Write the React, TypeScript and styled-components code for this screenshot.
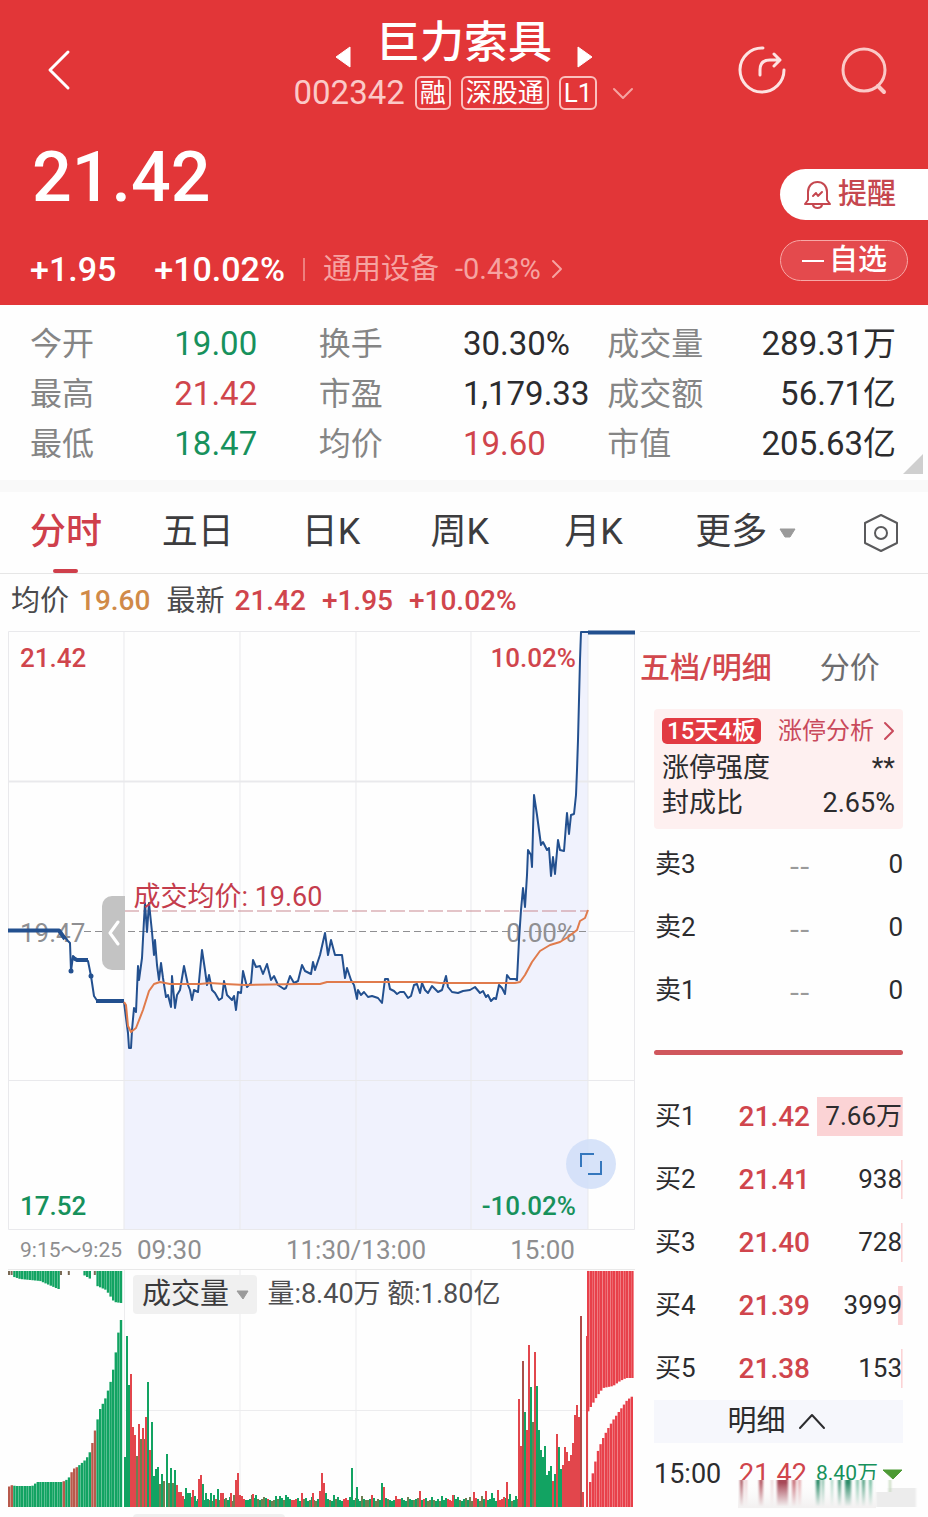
import React from "react";
import styled, { createGlobalStyle } from "styled-components";

const RED = "#d0454c";
const GREEN = "#17915c";
const INK = "#2c2c2e";

const GlobalStyle = createGlobalStyle`
  * { box-sizing: border-box; }
  body { margin: 0; background: #fefefe; }
  body, button { font-family: Roboto, "Noto Sans CJK SC", sans-serif; line-height: 1.2; }
  button { border: 0; padding: 0; margin: 0; background: none; color: inherit; cursor: pointer; }
  svg { display: block; }
`;

const Page = styled.main`
  color: ${INK};
  overflow: hidden;
`;

/* ---------- header ---------- */

const Header = styled.header`
  background: #e23638;
  color: #fff;
`;

const TopBar = styled.div`
  display: grid;
  grid-template-columns: 1fr auto 1fr;
`;

const TopSide = styled.div<{ $end?: boolean }>`
  display: flex;
  align-items: center;
  justify-content: ${(p) => (p.$end ? "flex-end" : "flex-start")};
  gap: 52px;
  padding: 30px 40px 0 46px;
`;

const IconButton = styled.button`
  display: flex;
`;

const TitleBlock = styled.div`
  display: flex;
  flex-direction: column;
  align-items: center;
  gap: 6px;
  padding-top: 16px;
`;

const TitleRow = styled.div`
  display: flex;
  align-items: flex-end;
  gap: 24px;
  height: 54px;
`;

const Title = styled.h1`
  margin: 0;
  font-size: 44px;
  line-height: 54px;
  font-weight: 500;
`;

const StepButton = styled(IconButton)`
  margin-bottom: 2px;
`;

const CodeRow = styled.div`
  display: flex;
  align-items: center;
  gap: 10px;
  height: 34px;
`;

const Code = styled.span`
  font-size: 33px;
  line-height: 34px;
  color: #fbc9c7;
`;

const Badge = styled.span`
  height: 34px;
  padding: 0 3px;
  border: 2px solid #fbc0be;
  border-radius: 6px;
  font-size: 26px;
  line-height: 31px;
`;

const CodeButton = styled(IconButton)`
  margin-left: 5px;
`;

const QuoteRow = styled.div`
  display: flex;
  justify-content: space-between;
  padding-bottom: 16px;
`;

const QuoteMain = styled.div`
  padding: 31px 0 0 30px;
`;

const BigPrice = styled.div`
  padding-left: 2px;
  font-size: 70px;
  line-height: 72px;
  font-weight: 500;
`;

const ChangeRow = styled.div`
  display: flex;
  align-items: center;
  height: 40px;
  margin-top: 36px;
  font-size: 34px;
  font-weight: 500;
`;

const ChangeRate = styled.span`
  margin-left: 38px;
`;

const Divider = styled.span`
  width: 2px;
  height: 23px;
  margin: 0 18px;
  background: #ee7f7e;
`;

const SectorLink = styled.a`
  display: flex;
  align-items: center;
  gap: 16px;
  color: #f6a3a1;
  font-size: 29px;
  font-weight: 400;
  text-decoration: none;
`;

const SectorRate = styled.span`
  display: flex;
  align-items: center;
  gap: 10px;
`;

const QuoteActions = styled.div`
  display: flex;
  flex-direction: column;
  gap: 20px;
  padding-top: 59px;
`;

const RemindButton = styled.button`
  display: flex;
  align-items: center;
  gap: 6px;
  width: 148px;
  height: 51px;
  padding-left: 23px;
  border-radius: 26px 0 0 26px;
  background: #fff;
  color: #c5474f;
  font-size: 29px;
  font-weight: 500;
`;

const WatchButton = styled.button`
  display: flex;
  align-items: center;
  justify-content: center;
  gap: 4px;
  width: 128px;
  height: 41px;
  border: 1px solid #f7a8a6;
  border-radius: 21px;
  background: #e44a4d;
  font-size: 29px;
  font-weight: 500;
`;

/* ---------- key figures ---------- */

const Stats = styled.dl`
  position: relative;
  display: grid;
  grid-template-columns: repeat(3, 1fr);
  margin: 0;
  padding: 14px 32px 11px 30px;
  border-bottom: 12px solid #f9f9f9;
`;

const Stat = styled.div`
  display: grid;
  grid-template-columns: 1fr 1fr;
  font-size: 33px;
  line-height: 50px;
  white-space: nowrap;
`;

const StatName = styled.dt`
  color: #858585;
  font-size: 32px;
`;

const StatValue = styled.dd<{ $color?: string; $end?: boolean }>`
  margin: 0;
  justify-self: ${(p) => (p.$end ? "end" : "start")};
  color: ${(p) => p.$color ?? INK};
`;

const Corner = styled.svg`
  position: absolute;
  right: 5px;
  bottom: 6px;
`;

/* ---------- period tabs ---------- */

const Tabs = styled.nav`
  display: grid;
  grid-template-columns: 132fr 140fr 129fr 134fr 131fr 167fr auto;
  align-items: center;
  height: 82px;
  padding: 0 28px 0 30px;
  border-bottom: 1px solid #e6e6e6;
`;

const Tab = styled.button<{ $active?: boolean }>`
  position: relative;
  display: flex;
  align-items: center;
  justify-self: start;
  gap: 12px;
  height: 81px;
  color: ${(p) => (p.$active ? "#cf3f4b" : "#3c3c3e")};
  font-size: 36px;
  font-weight: ${(p) => (p.$active ? 500 : 400)};
  &::after {
    content: "";
    display: ${(p) => (p.$active ? "block" : "none")};
    position: absolute;
    left: 50%;
    bottom: 0;
    width: 25px;
    height: 4px;
    margin-left: -13px;
    border-radius: 2px;
    background: #cf3f4b;
  }
`;

const Summary = styled.div`
  display: flex;
  align-items: center;
  gap: 10px;
  height: 57px;
  padding: 0 0 3px 11px;
  color: #4a4a4c;
  font-size: 29px;
`;

const SummaryValue = styled.span<{ $color: string }>`
  margin-right: 6px;
  color: ${(p) => p.$color};
  font-size: 28px;
  font-weight: 500;
`;

/* ---------- charts ---------- */

const Board = styled.section`
  display: grid;
  grid-template-columns: minmax(0, 1fr) 288px;
`;

const Charts = styled.div`
  padding: 0 5px 0 8px;
`;

const Plot = styled.div<{ $height: number }>`
  position: relative;
  height: ${(p) => p.$height}px;
`;

const Canvas = styled.svg`
  width: 100%;
  height: 100%;
  overflow: visible;
`;

const Overlay = styled.div`
  position: absolute;
  inset: 0;
`;

const Mark = styled.span<{ $color: string; $top: number; $end?: boolean; $light?: boolean }>`
  position: absolute;
  top: ${(p) => p.$top}px;
  ${(p) => (p.$end ? "right: 59px;" : "left: 12px;")}
  color: ${(p) => p.$color};
  font-size: 26px;
  line-height: 30px;
  font-weight: ${(p) => (p.$light ? 400 : 500)};
`;

const AverageMark = styled.span`
  position: absolute;
  left: 20%;
  top: 249px;
  color: #c43c4c;
  font-size: 27px;
  line-height: 34px;
`;

const Handle = styled.button`
  position: absolute;
  left: 15%;
  top: 265px;
  display: flex;
  align-items: center;
  justify-content: center;
  width: 23px;
  height: 74px;
  border-radius: 10px 0 0 10px;
  background: #c3c3c3;
`;

const ExpandButton = styled.button`
  position: absolute;
  right: 19px;
  top: 508px;
  display: flex;
  align-items: center;
  justify-content: center;
  width: 50px;
  height: 50px;
  border-radius: 50%;
  background: rgba(208, 222, 248, 0.85);
`;

const Axis = styled.div`
  display: grid;
  grid-template-columns: 116fr 464fr 47fr;
  align-items: center;
  height: 40px;
  padding-top: 2px;
  border-bottom: 1px solid #e9e9e9;
  color: #8e8e90;
  font-size: 26px;
  white-space: nowrap;
`;

const AuctionTime = styled.span`
  padding-left: 12px;
  font-size: 21px;
`;

const SessionTimes = styled.div`
  display: flex;
  justify-content: space-between;
  padding: 0 13px;
`;

const VolumeBar = styled.div`
  position: absolute;
  left: 20%;
  top: 5px;
  display: flex;
  align-items: center;
  gap: 10px;
  color: #4e4e50;
  font-size: 27px;
  white-space: nowrap;
`;

const Chip = styled.button`
  display: flex;
  align-items: center;
  justify-content: center;
  gap: 7px;
  width: 124px;
  height: 39px;
  border-radius: 4px;
  background: #f0f0f0;
  color: #3a3a3c;
  font-size: 29px;
`;

const NextPanel = styled.div`
  height: 10px;
  padding: 7px 0 0 20%;
  overflow: hidden;
`;

const NextChip = styled.div`
  width: 152px;
  height: 39px;
  border-radius: 4px;
  background: #f0f0f0;
`;

/* ---------- order book ---------- */

const Side = styled.aside`
  padding-right: 8px;
`;

const SideTabs = styled.div`
  display: flex;
  align-items: center;
  gap: 48px;
  height: 73px;
  border-top: 1px solid #ececec;
`;

const SideTab = styled.button<{ $active?: boolean }>`
  color: ${(p) => (p.$active ? "#d2484d" : "#6d6d6f")};
  font-size: 30px;
  font-weight: ${(p) => (p.$active ? 500 : 400)};
`;

const SideBody = styled.div`
  padding: 5px 17px 0 14px;
`;

const LimitCard = styled.div`
  height: 120px;
  padding: 9px 8px;
  border-radius: 4px;
  background: #fef0f0;
`;

const LimitHead = styled.div`
  display: flex;
  align-items: center;
  justify-content: space-between;
  height: 26px;
  margin-bottom: 7px;
`;

const LimitTag = styled.span`
  padding: 0 5px;
  border-radius: 5px;
  background: #e23a42;
  color: #fff;
  font-size: 24px;
  line-height: 26px;
  font-weight: 500;
`;

const LimitLink = styled.a`
  display: flex;
  align-items: center;
  gap: 9px;
  color: #c94a5c;
  font-size: 24px;
  line-height: 26px;
  text-decoration: none;
`;

const LimitRow = styled.div`
  display: flex;
  justify-content: space-between;
  font-size: 27px;
  line-height: 35px;
`;

const Book = styled.table<{ $top: number }>`
  width: 100%;
  margin-top: ${(p) => p.$top}px;
  border-collapse: collapse;
  font-size: 26px;
  table-layout: fixed;
`;

const Level = styled.th`
  height: 63px;
  width: 76px;
  padding: 0 0 0 1px;
  font-weight: 400;
  text-align: left;
`;

const Price = styled.td`
  width: 80px;
  padding: 0;
  color: ${RED};
  font-size: 28px;
  font-weight: 500;
  text-align: right;
`;

const EmptyPrice = styled(Price)`
  padding-bottom: 4px;
  color: #9a9a9a;
  font-family: "Noto Sans CJK SC", sans-serif;
  font-size: 30px;
  font-weight: 400;
`;

const Quantity = styled.td`
  padding: 0;
  text-align: right;
`;

const Depth = styled.span<{ $share: number }>`
  display: inline-block;
  height: 39px;
  padding: 0 1px 0 8px;
  background: linear-gradient(#fbd3d5, #fbd3d5) right / ${(p) => p.$share}% 100% no-repeat;
  line-height: 39px;
  white-space: nowrap;
`;

const SplitBar = styled.div`
  height: 5px;
  margin-top: 28px;
  border-radius: 3px;
  background: #d0575d;
`;

const DetailToggle = styled.button`
  display: flex;
  align-items: center;
  justify-content: center;
  gap: 12px;
  width: 100%;
  height: 43px;
  padding-right: 4px;
  background: #f6f7fc;
  font-size: 29px;
`;

const Trade = styled.div`
  position: relative;
  display: grid;
  grid-template-columns: 85px 77px 1fr auto;
  align-items: center;
  height: 62px;
  font-size: 27px;
`;

const TradePrice = styled.span`
  color: ${RED};
`;

const TradeSize = styled.span`
  color: ${GREEN};
  font-size: 21px;
`;

const Smear = styled.svg`
  position: absolute;
  right: -15px;
  top: 37px;
`;

/* ---------- data ---------- */

const auctionOpen = "8,930 59,930 63,935 68,941 70,943 71,971 73,956 77,960 88,961 91,976 94,996 98,1002 124,1002";

const priceLine =
  "124,1002 126,1018 128,1033 129,1048 131,1048 132,1030 134,1008 136,1012 138,966 139,980 142,958 144,920 145,903 147,932 149,903 152,932 154,955 155,940 157,965 159,980 161,963 163,978 166,997 168,995 171,1007 172,976 175,1008 177,995 180,990 184,966 188,985 190,990 192,1000 194,990 198,992 202,950 205,970 207,985 209,975 212,990 215,993 219,1000 222,998 224,981 227,995 232,1000 234,996 236,1010 238,992 241,993 243,971 247,987 251,983 253,960 256,967 260,966 263,974 267,964 271,980 274,976 278,985 284,989 286,988 290,976 294,983 298,981 302,965 305,971 311,974 313,962 315,970 320,955 325,933 328,955 331,940 335,955 342,955 345,978 347,968 351,980 354,985 357,999 358,990 361,995 364,992 368,997 372,996 378,998 382,1003 385,979 388,979 390,989 394,991 397,994 400,992 404,992 408,998 411,996 414,985 417,984 420,993 422,983 425,990 428,993 432,986 438,992 442,990 446,976 448,987 452,992 458,993 463,991 470,990 475,987 480,993 483,991 486,997 488,995 491,1001 494,998 496,999 499,985 502,988 505,994 507,975 510,979 515,979 517,980 519,940 521,910 523,888 525,907 527,875 528,850 531,855 532,867 533,830 534,795 537,815 541,845 543,842 547,850 549,848 551,876 553,857 555,874 558,840 560,850 564,851 566,825 567,813 569,834 571,815 574,814 576,795 577,770 578,740 579,700 580,660 581,632 588,632";

const averageLine =
  "124,1002 126,1005 128,1026 131,1032 136,1028 143,1010 149,991 154,984 160,982 170,984 200,984 210,983 225,984 245,985 300,984 320,984 327,982 430,982 440,983 515,983 520,982 525,975 532,962 540,951 550,945 560,942 568,937 577,930 580,921 585,918 588,910";

type Bar = { x: number; h: number; c: string; w?: number };
const UP = "#e2464c";
const DOWN = "#12a362";
const MIXED = "#6f7f52";
const DENSE = 2.4;

/* Linear interpolation through [x, value] stops. */
const curve = (stops: number[][], x: number) => {
  for (let i = 1; i < stops.length; i++) {
    const [x0, v0] = stops[i - 1];
    const [x1, v1] = stops[i];
    if (x <= x1) return v0 + ((v1 - v0) * (x - x0)) / (x1 - x0);
  }
  return stops[stops.length - 1][1];
};

const range = (from: number, to: number, step: number) =>
  Array.from({ length: Math.floor((to - from) / step) + 1 }, (_, i) => from + i * step);

const openTop: Bar[] = range(9, 121, 2.6).map((x) => {
  const gap = (x > 60 && x < 82) || (x > 92 && x < 95);
  const dot = x < 14 || (x > 60 && x < 63) || (x > 67 && x < 71) || (x > 94 && x < 97);
  const h = dot ? 4 : gap ? 0 : curve([[14, 6], [20, 8], [40, 10], [58, 18], [60, 18], [82, 3], [92, 9], [97, 15], [106, 19], [114, 31], [121, 32]], x);
  return { x, h, c: dot ? "#7a6a55" : DOWN, w: dot ? 2 : DENSE };
});

const openBottom: Bar[] = range(9, 122, 2.6).map((x) => ({
  x,
  h: curve([[8, 20], [12, 22], [15, 21], [32, 21], [37, 25], [62, 25], [68, 28], [73, 38], [77, 40], [84, 46], [88, 51], [91, 58], [94, 73], [97, 86], [100, 98], [105, 108], [109, 120], [112, 131], [115, 150], [118, 173], [120, 187]], x),
  c: x < 13 || (x > 61 && x < 66) || (x > 71 && x < 77) || (x > 92 && x < 97) ? "#b85a4c" : DOWN,
  w: DENSE,
}));

const busy: [number, number, string][] = [
  [125, 50, DOWN], [127, 171, DOWN], [129, 122, DOWN], [131, 133, UP], [133, 80, UP], [135, 72, UP], [137, 51, MIXED], [139, 83, UP], [141, 68, MIXED], [143, 79, UP], [145, 68, MIXED], [146, 90, UP], [148, 125, DOWN], [150, 57, UP], [152, 85, DOWN], [154, 31, DOWN], [156, 38, DOWN], [158, 40, DOWN], [160, 23, MIXED], [162, 33, DOWN], [164, 26, MIXED], [167, 53, DOWN], [169, 24, MIXED], [171, 39, DOWN], [173, 24, MIXED], [175, 37, DOWN], [177, 22, UP], [179, 15, UP], [181, 15, UP], [183, 11, UP], [186, 19, DOWN], [188, 14, DOWN], [190, 14, DOWN], [193, 17, UP], [195, 11, DOWN], [199, 28, UP], [201, 32, UP], [203, 23, DOWN], [206, 14, DOWN], [211, 14, DOWN], [218, 18, DOWN], [221, 14, UP], [223, 14, UP], [231, 14, UP], [234, 12, MIXED], [236, 27, UP], [238, 34, UP], [240, 12, UP], [253, 13, UP], [256, 12, DOWN], [280, 11, DOWN], [286, 12, DOWN], [302, 14, UP], [313, 14, UP], [320, 16, UP], [322, 34, UP], [324, 24, UP], [326, 14, DOWN], [352, 39, DOWN], [357, 20, DOWN], [382, 24, DOWN], [384, 20, UP], [420, 16, UP], [453, 12, UP], [474, 15, UP], [486, 16, UP], [492, 14, DOWN], [498, 17, UP], [507, 25, UP], [510, 13, DOWN],
  [519, 108, UP], [521, 61, UP], [523, 146, "#a8504a"], [525, 95, DOWN], [527, 77, UP], [529, 162, UP], [531, 120, DOWN], [533, 85, MIXED], [535, 155, UP], [537, 121, DOWN], [539, 77, DOWN], [541, 57, DOWN], [543, 50, DOWN], [545, 61, DOWN], [547, 32, DOWN], [549, 36, DOWN], [551, 41, DOWN], [553, 26, UP], [555, 33, DOWN], [557, 73, UP], [559, 60, DOWN], [561, 38, DOWN], [563, 42, UP], [565, 60, UP], [567, 55, UP], [569, 46, UP], [571, 52, UP], [573, 64, UP], [575, 92, UP], [577, 102, UP], [579, 90, UP], [581, 191, "#b04a48"], [583, 15, UP], [587, 171, UP],
];

/* One digit per two-pixel slot: the height of the calm trading between the peaks. */
const calm = "8967a7686b79876c8a76897a67986b8778c96878a98767b88976a8778967";
const tones = [DOWN, DOWN, UP, MIXED, UP, UP, MIXED, DOWN, MIXED, MIXED, UP, DOWN, MIXED];

const quiet: Bar[] = range(184, 518, 2).map((x, i) => ({
  x,
  h: parseInt(calm[i % calm.length], 16),
  c: tones[(i * i + (i >> 1)) % tones.length],
}));

const closeTop: Bar[] = range(588, 634, 2.6).map((x) => ({
  x,
  h: curve([[587, 142], [590, 137], [593, 132], [597, 125], [603, 117], [613, 115], [620, 110], [626, 107], [634, 107]], x),
  c: "#e8404a",
  w: DENSE,
}));

const closeBottom: Bar[] = range(590, 634, 2.6).map((x) => ({
  x,
  h: curve([[588, 14], [590, 25], [593, 35], [597, 54], [602, 67], [607, 77], [613, 87], [620, 97], [627, 107], [634, 112]], x),
  c: "#e8404a",
  w: DENSE,
}));

const risingBars: Bar[] = [...openBottom, ...quiet, ...busy.map(([x, h, c]) => ({ x, h, c })), ...closeBottom];
const hangingBars: Bar[] = [...openTop, ...closeTop];

const stats: { name: string; value: string; color?: string }[] = [
  { name: "今开", value: "19.00", color: GREEN },
  { name: "换手", value: "30.30%" },
  { name: "成交量", value: "289.31万" },
  { name: "最高", value: "21.42", color: RED },
  { name: "市盈", value: "1,179.33" },
  { name: "成交额", value: "56.71亿" },
  { name: "最低", value: "18.47", color: GREEN },
  { name: "均价", value: "19.60", color: RED },
  { name: "市值", value: "205.63亿" },
];

const asks = ["卖3", "卖2", "卖1"];
const bids: [string, string, string, number][] = [
  ["买1", "21.42", "7.66万", 100],
  ["买2", "21.41", "938", 3],
  ["买3", "21.40", "728", 3],
  ["买4", "21.39", "3999", 7],
  ["买5", "21.38", "153", 3],
];

const smearStreaks: [number, number, string][] = [
  [2, 3, "#b0606a"], [7, 2, "#ecc8cc"], [21, 4, "#b8626c"], [33, 2, "#ecd4d6"], [39, 11, "#a84a58"], [54, 4, "#cc7c84"], [60, 3, "#e6b0b4"],
  [78, 4, "#2f8d6a"], [84, 2, "#7ab89e"], [93, 2, "#a4d2c0"], [100, 3, "#4a9a7c"], [107, 6, "#2f8d6a"], [118, 3, "#8cc8b0"], [124, 3, "#58a486"], [131, 3, "#7ac0a4"],
];

/* ---------- pieces ---------- */

const Chevron = ({ d, w, h, color, stroke = 2 }: { d: string; w: number; h: number; color: string; stroke?: number }) => (
  <svg width={w} height={h} viewBox={`0 0 ${w} ${h}`} fill="none" stroke={color} strokeWidth={stroke} strokeLinecap="round" strokeLinejoin="round" aria-hidden="true">
    <path d={d} />
  </svg>
);

const Triangle = ({ d, w, h, color }: { d: string; w: number; h: number; color: string }) => (
  <svg width={w} height={h} viewBox={`0 0 ${w} ${h}`} fill={color} stroke={color} strokeWidth="1" strokeLinejoin="round" aria-hidden="true">
    <path d={d} />
  </svg>
);

const PriceChart = () => (
  <Plot $height={599}>
    <Canvas viewBox="8 631 627 599" preserveAspectRatio="none" role="img" aria-label="分时走势">
      <polygon points={`${priceLine} 588,1230 124,1230`} fill="#f0f2fd" />
      <g stroke="#e9e9ec" strokeWidth="1">
        {[124, 240, 356, 471, 588].map((x) => (
          <line key={x} x1={x} x2={x} y1="631" y2="1230" />
        ))}
        <path d="M8.5 631.5H634.5V1229.5H8.5ZM8 1080.5H635M588 931.5H635" fill="none" />
        <path d="M8 781.5H635" strokeWidth="2" />
      </g>
      <path d="M84 931.5H588" stroke="#8f8f92" strokeDasharray="7 4" />
      <path d="M124 911H588" stroke="#c98a92" strokeDasharray="15 4" />
    </Canvas>
    <Mark $color="#8f8f92" $top={287} $light>19.47</Mark>
    <Mark $color="#8f8f92" $top={287} $end $light>0.00%</Mark>
    <Overlay>
      <Canvas viewBox="8 631 627 599" preserveAspectRatio="none" aria-hidden="true">
        <g fill="none" stroke="#23508f" strokeWidth="2" strokeLinejoin="round">
          <polyline points={auctionOpen} />
          <polyline points={priceLine} />
          <path d="M8 930.5H59L65 939M73 958L77 960H88M96 1001H124M588 632.5H635" strokeWidth="4" />
        </g>
        <circle cx="71" cy="971" r="2.5" fill="#23508f" />
        <circle cx="91" cy="976" r="2.5" fill="#23508f" />
        <polyline points={averageLine} fill="none" stroke="#e07b4c" strokeWidth="2" strokeLinejoin="round" />
      </Canvas>
    </Overlay>
    <Mark $color={RED} $top={12}>21.42</Mark>
    <Mark $color={RED} $top={12} $end>10.02%</Mark>
    <Mark $color={GREEN} $top={560}>17.52</Mark>
    <Mark $color={GREEN} $top={560} $end>-10.02%</Mark>
    <AverageMark>成交均价: 19.60</AverageMark>
    <Handle aria-label="收起集合竞价">
      <Chevron d="M10 2L2 13L10 24" w={12} h={26} color="#fff" stroke={3} />
    </Handle>
    <ExpandButton aria-label="全屏">
      <svg width="24" height="24" viewBox="0 0 24 24" fill="none" stroke="#3577bd" strokeWidth="2" aria-hidden="true">
        <path d="M2 15V2H15M22 9V22H9" />
      </svg>
    </ExpandButton>
  </Plot>
);

const VolumeChart = () => (
  <Plot $height={237}>
    <Canvas viewBox="8 0 627 237" preserveAspectRatio="none" role="img" aria-label="成交量">
      <path d="M124.5 0V237M240 0V237M356 0V237M471 0V237M588 0V237M124 140.5H588" stroke="#ececee" fill="none" />
      {risingBars.map((b, i) => (
        <rect key={`r${i}`} x={b.x - 1} y={237 - b.h} width={b.w ?? 2} height={b.h} fill={b.c} />
      ))}
      {hangingBars.map((b, i) => (
        <rect key={`h${i}`} x={b.x - 1} y="1" width={b.w ?? 2} height={b.h} fill={b.c} />
      ))}
    </Canvas>
    <VolumeBar>
      <Chip>
        成交量
        <Triangle d="M1 1H12L7 9Z" w={13} h={10} color="#9a9a9a" />
      </Chip>
      <span>量:8.40万 额:1.80亿</span>
    </VolumeBar>
  </Plot>
);

export default function App() {
  return (
    <Page>
      <GlobalStyle />
      <Header>
        <TopBar>
          <TopSide>
            <IconButton aria-label="返回">
              <Chevron d="M22 3L4 21L22 39" w={26} h={42} color="#fff" stroke={3} />
            </IconButton>
          </TopSide>
          <TitleBlock>
            <TitleRow>
              <StepButton aria-label="上一只">
                <Triangle d="M16 1V21L2 11Z" w={18} h={22} color="#fff" />
              </StepButton>
              <Title>巨力索具</Title>
              <StepButton aria-label="下一只">
                <Triangle d="M2 1V21L16 11Z" w={18} h={22} color="#fff" />
              </StepButton>
            </TitleRow>
            <CodeRow>
              <Code>002342</Code>
              <Badge>融</Badge>
              <Badge>深股通</Badge>
              <Badge>L1</Badge>
              <CodeButton aria-label="更多标签">
                <Chevron d="M2 2L11 11L20 2" w={22} h={13} color="#f6a3a1" />
              </CodeButton>
            </CodeRow>
          </TitleBlock>
          <TopSide $end>
            <IconButton aria-label="分享">
              <svg width="50" height="50" viewBox="0 0 50 50" fill="none" stroke="#fde3e2" strokeWidth="3" strokeLinecap="round" strokeLinejoin="round" aria-hidden="true">
                <path d="M27 3A22 22 0 1 0 48 25" />
                <path d="M24 30V25C24 18 28 15 34 15H43M38 9L44 15L38 21" />
              </svg>
            </IconButton>
            <IconButton aria-label="搜索">
              <svg width="50" height="50" viewBox="0 0 50 50" fill="none" stroke="#fbc9c7" strokeWidth="3" strokeLinecap="round" aria-hidden="true">
                <circle cx="26" cy="25" r="21" />
                <path d="M40 41L46 47" strokeWidth="4" />
              </svg>
            </IconButton>
          </TopSide>
        </TopBar>
        <QuoteRow>
          <QuoteMain>
            <BigPrice>21.42</BigPrice>
            <ChangeRow>
              <span>+1.95</span>
              <ChangeRate>+10.02%</ChangeRate>
              <Divider />
              <SectorLink href="#sector">
                通用设备
                <SectorRate>
                  -0.43%
                  <Chevron d="M2 2L10 10L2 18" w={12} h={20} color="#f6a3a1" />
                </SectorRate>
              </SectorLink>
            </ChangeRow>
          </QuoteMain>
          <QuoteActions>
            <RemindButton>
              <svg width="29" height="30" viewBox="0 0 29 30" fill="none" stroke="#c5474f" strokeWidth="2" strokeLinejoin="round" strokeLinecap="round" aria-hidden="true">
                <path d="M2 24L5 20V12C5 6 9 2 14.5 2S24 6 24 12V20L27 24Z" />
                <path d="M10 25C11 29 18 29 19 25M10 16L13 13L15 16L19 12" />
              </svg>
              提醒
            </RemindButton>
            <WatchButton>
              <svg width="24" height="4" viewBox="0 0 24 4" aria-hidden="true">
                <path d="M1 2H23" stroke="#fff" strokeWidth="2" />
              </svg>
              自选
            </WatchButton>
          </QuoteActions>
        </QuoteRow>
      </Header>

      <Stats>
        {stats.map((s, i) => (
          <Stat key={s.name}>
            <StatName>{s.name}</StatName>
            <StatValue $color={s.color} $end={i % 3 === 2}>{s.value}</StatValue>
          </Stat>
        ))}
        <Corner width="20" height="20" viewBox="0 0 20 20" aria-hidden="true">
          <path d="M20 0V20H0Z" fill="#cfcfcf" />
        </Corner>
      </Stats>

      <Tabs>
        <Tab $active>分时</Tab>
        <Tab>五日</Tab>
        <Tab>日K</Tab>
        <Tab>周K</Tab>
        <Tab>月K</Tab>
        <Tab>
          更多
          <Triangle d="M1 1H16L11 9H6Z" w={17} h={10} color="#9a9a9a" />
        </Tab>
        <IconButton aria-label="设置">
          <svg width="38" height="40" viewBox="0 0 38 40" fill="none" stroke="#5a5a5c" strokeWidth="2" strokeLinejoin="round" aria-hidden="true">
            <path d="M19 2L35 10V30L19 38L3 30V10Z" />
            <circle cx="19" cy="20" r="6" />
          </svg>
        </IconButton>
      </Tabs>

      <Summary>
        <span>均价</span>
        <SummaryValue $color="#d08a48">19.60</SummaryValue>
        <span>最新</span>
        <SummaryValue $color={RED}>21.42</SummaryValue>
        <SummaryValue $color={RED}>+1.95</SummaryValue>
        <SummaryValue $color={RED}>+10.02%</SummaryValue>
      </Summary>

      <Board>
        <Charts>
          <PriceChart />
          <Axis>
            <AuctionTime>9:15～9:25</AuctionTime>
            <SessionTimes>
              <span>09:30</span>
              <span>11:30/13:00</span>
              <span>15:00</span>
            </SessionTimes>
          </Axis>
          <VolumeChart />
          <NextPanel>
            <NextChip />
          </NextPanel>
        </Charts>

        <Side>
          <SideTabs>
            <SideTab $active>五档/明细</SideTab>
            <SideTab>分价</SideTab>
          </SideTabs>
          <SideBody>
            <LimitCard>
              <LimitHead>
                <LimitTag>15天4板</LimitTag>
                <LimitLink href="#limit">
                  涨停分析
                  <Chevron d="M2 2L10 10L2 18" w={12} h={20} color="#c94a5c" />
                </LimitLink>
              </LimitHead>
              <LimitRow>
                <span>涨停强度</span>
                <span>**</span>
              </LimitRow>
              <LimitRow>
                <span>封成比</span>
                <span>2.65%</span>
              </LimitRow>
            </LimitCard>
            <Book $top={4}>
              <tbody>
                {asks.map((name) => (
                  <tr key={name}>
                    <Level scope="row">{name}</Level>
                    <EmptyPrice>--</EmptyPrice>
                    <Quantity>0</Quantity>
                  </tr>
                ))}
              </tbody>
            </Book>
            <SplitBar />
            <Book $top={30}>
              <tbody>
                {bids.map(([name, price, size, share]) => (
                  <tr key={name}>
                    <Level scope="row">{name}</Level>
                    <Price>{price}</Price>
                    <Quantity>
                      <Depth $share={share}>{size}</Depth>
                    </Quantity>
                  </tr>
                ))}
              </tbody>
            </Book>
            <DetailToggle>
              明细
              <Chevron d="M2 15L14 2L26 15" w={28} h={17} color="#2c2c2e" />
            </DetailToggle>
            <Trade>
              <span>15:00</span>
              <TradePrice>21.42</TradePrice>
              <TradeSize>8.40万</TradeSize>
              <Triangle d="M1 1H20L11 10Z" w={21} h={11} color="#4d9a35" />
              <Smear width="180" height="29" viewBox="0 0 180 29" aria-hidden="true">
                <defs>
                  <linearGradient id="fade" x1="0" y1="0" x2="0" y2="1">
                    <stop offset="0.1" stopColor="#fafafa" stopOpacity="0" />
                    <stop offset="0.95" stopColor="#f3f1f1" />
                  </linearGradient>
                  <filter id="soft" x="-5%" y="0" width="110%" height="100%">
                    <feGaussianBlur stdDeviation="1 0" />
                  </filter>
                </defs>
                <rect width="138" height="29" fill="#fdfdfd" />
                <g filter="url(#soft)">
                  {smearStreaks.map(([x, w, c]) => (
                    <rect key={x} x={x} y="0" width={w} height="28" fill={c} />
                  ))}
                  <path d="M138 12H150V8H178V27H138Z" fill="#ececec" />
                  <path d="M151 0H153V12H151Z" fill="#c4d8bc" />
                </g>
                <rect width="138" height="28" fill="url(#fade)" />
              </Smear>
            </Trade>
          </SideBody>
        </Side>
      </Board>
    </Page>
  );
}
